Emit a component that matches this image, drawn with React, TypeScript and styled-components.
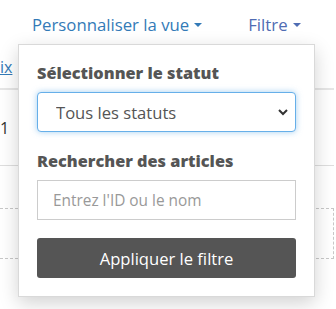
import { FC } from 'react'
import styled, { createGlobalStyle } from 'styled-components'

const GlobalStyle = createGlobalStyle`
	html, body {
		margin: 0;
		padding: 0;
		background: #fff;
	}
	body {
		font-family: 'Open Sans', 'Liberation Sans', sans-serif;
		color: #555;
		overflow: hidden;
	}
	* {
		box-sizing: border-box;
	}
`

const Page = styled.div`
	position: relative;
	width: 336px;
	height: 309px;
	overflow: hidden;
`

const TopBar = styled.nav`
	display: flex;
	align-items: center;
	height: 44px;
	padding: 4px 0 0 32px;
	gap: 46px;
`

const Toggle = styled.a<{ $muted?: boolean }>`
	display: flex;
	align-items: center;
	gap: 5px;
	font-size: 16.75px;
	color: ${({ $muted }) => ($muted ? '#4f6cb3' : '#337ab7')};
	cursor: pointer;
`

const Caret = styled.span`
	width: 0;
	height: 0;
	border-left: 4px solid transparent;
	border-right: 4px solid transparent;
	border-top: 4px solid currentColor;
	margin-top: 2px;
`

const Content = styled.div`
	width: 334px;
`

const LinkRow = styled.div`
	height: 46px;
	padding-top: 12px;
	border-bottom: 2px solid #e6e6e6;
	font-size: 16px;
`

const CutLink = styled.a`
	color: #337ab7;
	text-decoration: underline;
`

const CountRow = styled.div`
	height: 76px;
	display: flex;
	align-items: center;
	border-bottom: 1px solid #dedede;
	font-size: 16px;
	color: #333;
`

const DropZone = styled.div`
	margin-top: 42px;
	height: 51px;
	border: 1px dashed #c8c8c8;
	border-left: none;
`

const Panel = styled.div`
	position: absolute;
	left: 18px;
	top: 44px;
	width: 297px;
	padding: 17px 18px 18px;
	background: #fff;
	border: 1px solid rgba(0, 0, 0, 0.15);
	box-shadow: 0 6px 18px rgba(0, 0, 0, 0.18);
	display: flex;
	flex-direction: column;
`

const Label = styled.label<{ $spaced?: boolean }>`
	font-size: 16.3px;
	font-weight: 800;
	line-height: 22px;
	color: #555;
	margin: ${({ $spaced }) => ($spaced ? '18px 0 8px' : '0 0 8px')};
`

const SelectWrap = styled.div`
	position: relative;
	height: 40px;
`

const Select = styled.select`
	appearance: none;
	width: 100%;
	height: 40px;
	padding: 0 30px 0 18px;
	font-family: inherit;
	font-size: 16.6px;
	color: #555;
	background: #fff;
	border: 1px solid #66afe9;
	border-radius: 4px;
	box-shadow: 0 0 6px rgba(102, 175, 233, 0.6);
	outline: none;
`

const Chevron = styled.svg`
	position: absolute;
	right: 7px;
	top: 16px;
	pointer-events: none;
`

const Input = styled.input`
	height: 40px;
	width: 100%;
	padding: 0 15px;
	font-family: inherit;
	font-size: 15.4px;
	color: #555;
	border: 1px solid #ccc;
	border-radius: 0;
	outline: none;

	&::placeholder {
		color: #999;
	}
`

const ApplyButton = styled.button`
	margin-top: 18px;
	height: 40px;
	width: 100%;
	background: #555;
	color: #fff;
	border: none;
	border-radius: 3px;
	font-family: inherit;
	font-size: 16.6px;
	cursor: pointer;
`

const App: FC = () => {
	return (
		<>
			<GlobalStyle />
			<Page>
				<TopBar>
					<Toggle>
						Personnaliser la vue
						<Caret />
					</Toggle>
					<Toggle $muted>
						Filtre
						<Caret />
					</Toggle>
				</TopBar>
				<Content>
					<LinkRow>
						<CutLink>ix</CutLink>
					</LinkRow>
					<CountRow>1</CountRow>
					<DropZone />
				</Content>
				<Panel>
					<Label>Sélectionner le statut</Label>
					<SelectWrap>
						<Select defaultValue='all'>
							<option value='all'>Tous les statuts</option>
						</Select>
						<Chevron width='12' height='8' viewBox='0 0 12 8'>
							<path
								d='M2 2 L6 6 L10 2'
								fill='none'
								stroke='#333'
								strokeWidth='2'
							/>
						</Chevron>
					</SelectWrap>
					<Label $spaced>Rechercher des articles</Label>
					<Input placeholder="Entrez l'ID ou le nom" />
					<ApplyButton>Appliquer le filtre</ApplyButton>
				</Panel>
			</Page>
		</>
	)
}

export default App
